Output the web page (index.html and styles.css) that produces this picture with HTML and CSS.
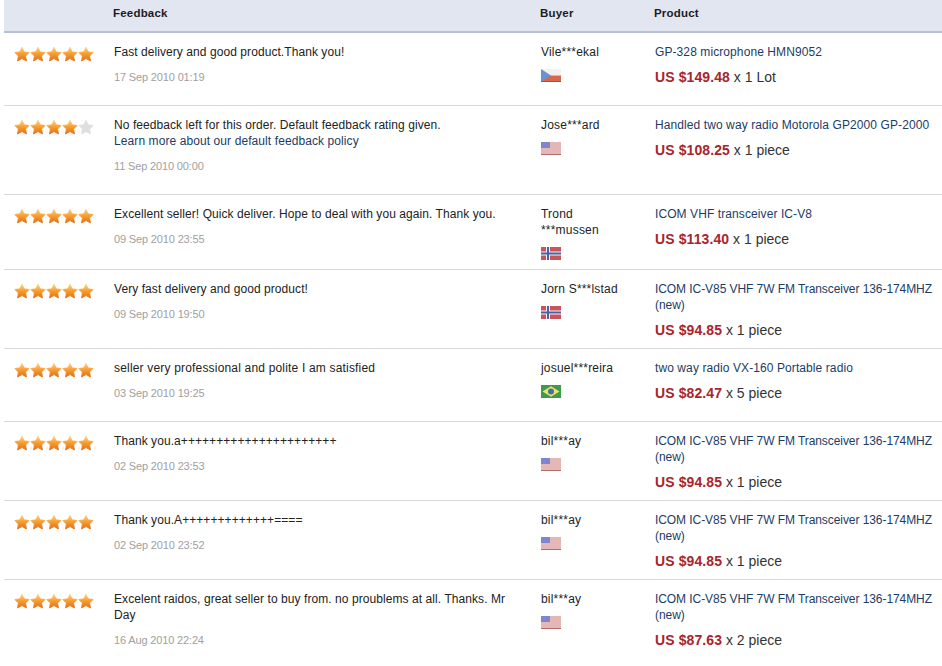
FILE: index.html
```html
<!DOCTYPE html>
<html lang="en">
<head>
<meta charset="utf-8">
<title>Feedback</title>
<link rel="stylesheet" href="styles.css">
</head>
<body>
<svg class="defs" aria-hidden="true">
  <defs>
    <linearGradient id="gold" x1="0" y1="0" x2="0" y2="1">
      <stop offset="0" stop-color="#fdd48a"/>
      <stop offset="0.45" stop-color="#f9a032"/>
      <stop offset="1" stop-color="#e26d16"/>
    </linearGradient>
    <symbol id="star" viewBox="0 0 16 16">
      <path d="M8 1.2l2.2 4.6 5 .7-3.6 3.5.9 5L8 12.6l-4.5 2.4.9-5L.8 6.5l5-.7z" stroke-linejoin="round"/>
    </symbol>
    <symbol id="cz" viewBox="0 0 20 13">
      <rect width="20" height="6.5" fill="#f2f2f4"/>
      <rect y="6.5" width="20" height="6.5" fill="#d9674d"/>
      <path d="M0 0l10 6.5L0 13z" fill="#6b93cf"/>
      <path d="M0 12.5h20" stroke="#7a4a40" stroke-width="1" opacity=".6"/>
    </symbol>
    <symbol id="us" viewBox="0 0 20 13">
      <rect width="20" height="13" fill="#f4eeee"/>
      <path d="M0 1h20M0 3h20M0 5h20M0 7h20M0 9h20M0 11h20" stroke="#d58080" stroke-width="1"/>
      <rect width="9" height="6" fill="#7f86cf"/>
      <path d="M0 12.5h20" stroke="#b4696b" stroke-width="1"/>
    </symbol>
    <symbol id="no" viewBox="0 0 20 13">
      <rect width="20" height="13" fill="#c9545a"/>
      <path d="M0 6.5h20M7 0v13" stroke="#f2f2f4" stroke-width="4"/>
      <path d="M0 6.5h20M7 0v13" stroke="#4f5ea8" stroke-width="2"/>
    </symbol>
    <symbol id="br" viewBox="0 0 20 13">
      <rect width="20" height="13" fill="#3f9a4a"/>
      <path d="M10 1.2L18.5 6.5 10 11.8 1.5 6.5z" fill="#ebe36a"/>
      <circle cx="10" cy="6.5" r="3" fill="#456fa8"/>
    </symbol>
  </defs>
</svg>
<main class="page">
<table class="feedback">
  <colgroup>
    <col class="c-rate"><col class="c-text"><col class="c-buyer"><col class="c-prod">
  </colgroup>
  <thead>
    <tr><th></th><th>Feedback</th><th>Buyer</th><th>Product</th></tr>
  </thead>
  <tbody>
    <tr>
      <td><div class="stars"><svg class="s"><use href="#star"/></svg><svg class="s"><use href="#star"/></svg><svg class="s"><use href="#star"/></svg><svg class="s"><use href="#star"/></svg><svg class="s"><use href="#star"/></svg></div></td>
      <td><p class="msg">Fast delivery and good product.Thank you!</p><p class="date">17 Sep 2010 01:19</p></td>
      <td><p class="buyer">Vile***ekal</p><svg class="flag"><use href="#cz"/></svg></td>
      <td><a class="prod" href="#">GP-328 microphone HMN9052</a><p class="price"><b>US $149.48</b> x 1 Lot</p></td>
    </tr>
    <tr>
      <td><div class="stars"><svg class="s"><use href="#star"/></svg><svg class="s"><use href="#star"/></svg><svg class="s"><use href="#star"/></svg><svg class="s"><use href="#star"/></svg><svg class="s off"><use href="#star"/></svg></div></td>
      <td><p class="msg">No feedback left for this order. Default feedback rating given.<br><a class="prod" href="#">Learn more about our default feedback policy</a></p><p class="date">11 Sep 2010 00:00</p></td>
      <td><p class="buyer">Jose***ard</p><svg class="flag"><use href="#us"/></svg></td>
      <td><a class="prod" href="#">Handled two way radio Motorola GP2000 GP-2000</a><p class="price"><b>US $108.25</b> x 1 piece</p></td>
    </tr>
    <tr>
      <td><div class="stars"><svg class="s"><use href="#star"/></svg><svg class="s"><use href="#star"/></svg><svg class="s"><use href="#star"/></svg><svg class="s"><use href="#star"/></svg><svg class="s"><use href="#star"/></svg></div></td>
      <td><p class="msg">Excellent seller! Quick deliver. Hope to deal with you again. Thank you.</p><p class="date">09 Sep 2010 23:55</p></td>
      <td><p class="buyer">Trond ***mussen</p><svg class="flag"><use href="#no"/></svg></td>
      <td><a class="prod" href="#">ICOM VHF transceiver IC-V8</a><p class="price"><b>US $113.40</b> x 1 piece</p></td>
    </tr>
    <tr>
      <td><div class="stars"><svg class="s"><use href="#star"/></svg><svg class="s"><use href="#star"/></svg><svg class="s"><use href="#star"/></svg><svg class="s"><use href="#star"/></svg><svg class="s"><use href="#star"/></svg></div></td>
      <td><p class="msg">Very fast delivery and good product!</p><p class="date">09 Sep 2010 19:50</p></td>
      <td><p class="buyer">Jorn S***lstad</p><svg class="flag"><use href="#no"/></svg></td>
      <td><a class="prod tight" href="#">ICOM IC-V85 VHF 7W FM Transceiver 136-174MHZ (new)</a><p class="price"><b>US $94.85</b> x 1 piece</p></td>
    </tr>
    <tr>
      <td><div class="stars"><svg class="s"><use href="#star"/></svg><svg class="s"><use href="#star"/></svg><svg class="s"><use href="#star"/></svg><svg class="s"><use href="#star"/></svg><svg class="s"><use href="#star"/></svg></div></td>
      <td><p class="msg wide">seller very professional and polite I am satisfied</p><p class="date">03 Sep 2010 19:25</p></td>
      <td><p class="buyer">josuel***reira</p><svg class="flag"><use href="#br"/></svg></td>
      <td><a class="prod" href="#">two way radio VX-160 Portable radio</a><p class="price"><b>US $82.47</b> x 5 piece</p></td>
    </tr>
    <tr>
      <td><div class="stars"><svg class="s"><use href="#star"/></svg><svg class="s"><use href="#star"/></svg><svg class="s"><use href="#star"/></svg><svg class="s"><use href="#star"/></svg><svg class="s"><use href="#star"/></svg></div></td>
      <td><p class="msg">Thank you.a++++++++++++++++++++++</p><p class="date">02 Sep 2010 23:53</p></td>
      <td><p class="buyer">bil***ay</p><svg class="flag"><use href="#us"/></svg></td>
      <td><a class="prod tight" href="#">ICOM IC-V85 VHF 7W FM Transceiver 136-174MHZ (new)</a><p class="price"><b>US $94.85</b> x 1 piece</p></td>
    </tr>
    <tr>
      <td><div class="stars"><svg class="s"><use href="#star"/></svg><svg class="s"><use href="#star"/></svg><svg class="s"><use href="#star"/></svg><svg class="s"><use href="#star"/></svg><svg class="s"><use href="#star"/></svg></div></td>
      <td><p class="msg">Thank you.A+++++++++++++====</p><p class="date">02 Sep 2010 23:52</p></td>
      <td><p class="buyer">bil***ay</p><svg class="flag"><use href="#us"/></svg></td>
      <td><a class="prod tight" href="#">ICOM IC-V85 VHF 7W FM Transceiver 136-174MHZ (new)</a><p class="price"><b>US $94.85</b> x 1 piece</p></td>
    </tr>
    <tr>
      <td><div class="stars"><svg class="s"><use href="#star"/></svg><svg class="s"><use href="#star"/></svg><svg class="s"><use href="#star"/></svg><svg class="s"><use href="#star"/></svg><svg class="s"><use href="#star"/></svg></div></td>
      <td><p class="msg">Excelent raidos, great seller to buy from. no proublems at all. Thanks. Mr Day</p><p class="date">16 Aug 2010 22:24</p></td>
      <td><p class="buyer">bil***ay</p><svg class="flag"><use href="#us"/></svg></td>
      <td><a class="prod tight" href="#">ICOM IC-V85 VHF 7W FM Transceiver 136-174MHZ (new)</a><p class="price"><b>US $87.63</b> x 2 piece</p></td>
    </tr>
  </tbody>
</table>
</main>
</body>
</html>
```

FILE: styles.css
```css
html, body {
  margin: 0;
  padding: 0;
  background: #fff;
}
body {
  font-family: "Liberation Sans", Arial, sans-serif;
  font-size: 12px;
  line-height: 16px;
  color: #222;
  overflow: hidden;
}
.defs {
  width: 0;
  height: 0;
  display: block;
}
.page {
  padding-left: 4px;
}
.feedback {
  width: 938px;
  table-layout: fixed;
  border-collapse: collapse;
}
.c-rate { width: 110px; }
.c-text { width: 427px; }
.c-buyer { width: 114px; }
.c-prod { width: 287px; }
.feedback th {
  height: 25px;
  padding: 0 0 6px 0;
  background: #e2e6f0;
  border-bottom: 2px solid #b9c0d4;
  text-align: left;
  font-size: 11.5px;
  font-weight: bold;
  color: #1c1c1c;
  letter-spacing: .2px;
  text-indent: -1px;
}
.feedback td {
  padding: 11px 0 10px;
  vertical-align: top;
  border-bottom: 1px solid #d9d9d9;
}
.feedback tr:last-child td {
  border-bottom: 0;
}
p { margin: 0; }
.msg {
  width: 400px;
  letter-spacing: .07px;
}
.msg.wide {
  letter-spacing: .18px;
}
.date {
  margin: 9px 0 10px;
  color: #a0a0a0;
  font-size: 11px;
  letter-spacing: -.15px;
}
.buyer {
  width: 84px;
  letter-spacing: .2px;
}
.flag {
  display: block;
  width: 20px;
  height: 13px;
  margin: 9px 0 -1px;
}
.prod {
  color: #1c3c66;
  text-decoration: none;
  letter-spacing: .09px;
}
.prod.tight {
  letter-spacing: -.07px;
}
.price {
  margin-top: 9px;
  font-size: 14px;
  color: #333;
}
.price b {
  color: #a8252d;
  letter-spacing: .1px;
}
.stars {
  display: flex;
  margin: 2px 0 0 10px;
}
.s {
  width: 16px;
  height: 16px;
  fill: url(#gold);
  stroke: url(#gold);
  stroke-width: .8;
}
.s.off {
  fill: #dedfe1;
  stroke: #dedfe1;
}
```
